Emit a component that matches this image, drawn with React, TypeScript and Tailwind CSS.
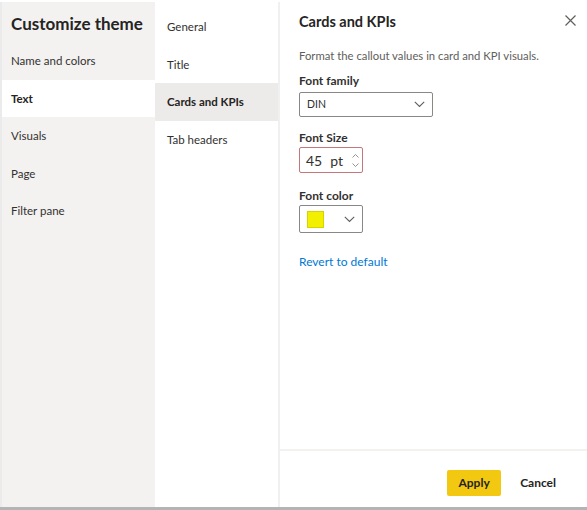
import React from 'react';

const font = { fontFamily: 'Lato, "Noto Sans", sans-serif' };

const sections = ['Name and colors', 'Text', 'Visuals', 'Page', 'Filter pane'];
const subSections = ['General', 'Title', 'Cards and KPIs', 'Tab headers'];

const Chevron = ({ className }: { className?: string }) => (
  <svg className={className} width="11" height="7" viewBox="0 0 11 7" fill="none">
    <path d="M0.8 0.8 L5.5 5.5 L10.2 0.8" stroke="#605e5c" strokeWidth="1.1" />
  </svg>
);

export default function App() {
  const activeSection = 'Text';
  const activeSub = 'Cards and KPIs';

  return (
    <div style={font} className="w-[587px] h-[510px] flex bg-white border-b-[3px] border-[#b4b4b4] pt-[2px] text-[#323130]">
      {/* Theme sections */}
      <div className="w-[155px] bg-[#f3f2f1] border-l-2 border-[#ebebeb] flex flex-col">
        <h1 className="h-[40px] pl-[9px] pt-[11px] text-[17px] font-bold text-[#252423] leading-[22px] whitespace-nowrap">Customize theme</h1>
        {sections.map((s) => (
          <div
            key={s}
            className={`h-[37.5px] flex items-center pl-[9px] text-[11.5px] whitespace-nowrap ${
              s === activeSection ? 'bg-white font-bold text-[#252423]' : 'text-[#323130]'
            }`}
          >
            {s}
          </div>
        ))}
      </div>

      {/* Sub sections */}
      <div className="w-[125px] border-r-2 border-[#f0f0f0] flex flex-col pt-[6px]">
        {subSections.map((s) => (
          <div
            key={s}
            className={`h-[37.5px] flex items-center pl-[12px] text-[11.5px] whitespace-nowrap ${
              s === activeSub ? 'bg-[#edebe9] font-bold text-[#252423]' : 'text-[#323130]'
            }`}
          >
            {s}
          </div>
        ))}
      </div>

      {/* Format pane */}
      <div className="flex-1 flex flex-col">
        <div className="flex-1 pl-[19px] pr-[10px] relative">
          <button className="absolute right-[11px] top-[13px] text-[#605e5c]">
            <svg width="11" height="11" viewBox="0 0 11 11">
              <path d="M0.5 0.5 L10.5 10.5 M10.5 0.5 L0.5 10.5" stroke="#605e5c" strokeWidth="1.2" />
            </svg>
          </button>
          <h2 className="pt-[10px] text-[14.5px] font-bold leading-[20px] text-[#252423] whitespace-nowrap">Cards and KPIs</h2>
          <p className="mt-[17px] text-[11.3px] leading-[14px] text-[#605e5c] whitespace-nowrap">Format the callout values in card and KPI visuals.</p>

          <div className="mt-[10px] text-[12px] font-bold leading-[16px]">Font family</div>
          <div className="mt-[3px] w-[134px] h-[25px] border border-[#8a8886] rounded-[2px] flex items-center justify-between pl-[7px] pr-[7px]">
            <span className="text-[10.5px] text-[#323130]">DIN</span>
            <Chevron />
          </div>

          <div className="mt-[13px] text-[12px] font-bold leading-[16px]">Font Size</div>
          <div className="mt-[1px] w-[64px] h-[26px] border border-[#c4767a] rounded-[2px] flex items-center pl-[6px] pr-[3px]">
            <span className="text-[14px] text-[#323130]">45</span>
            <span className="ml-[8px] text-[14px] text-[#323130]">pt</span>
            <div className="ml-auto flex flex-col gap-[5px]">
              <svg width="7" height="4" viewBox="0 0 7 4">
                <path d="M0.5 3.5 L3.5 0.5 L6.5 3.5" stroke="#8a8886" strokeWidth="0.9" fill="none" />
              </svg>
              <svg width="7" height="4" viewBox="0 0 7 4">
                <path d="M0.5 0.5 L3.5 3.5 L6.5 0.5" stroke="#8a8886" strokeWidth="0.9" fill="none" />
              </svg>
            </div>
          </div>

          <div className="mt-[15px] text-[12px] font-bold leading-[16px]">Font color</div>
          <div className="mt-[1px] w-[64px] h-[28px] border border-[#8a8886] rounded-[2px] flex items-center justify-between pl-[7px] pr-[7px]">
            <span className="w-[17px] h-[17px] bg-[#f2f000] border border-[#d6d400]" />
            <Chevron />
          </div>

          <button className="mt-[20px] block text-[12px] text-[#0078d4]">Revert to default</button>
        </div>

        <div className="h-[58px] border-t-2 border-[#f3f2f1] flex items-center justify-end pr-[31px]">
          <button className="w-[54px] h-[26px] bg-[#f2c811] rounded-[2px] text-[12px] font-bold text-[#252423] mt-[8px]">Apply</button>
          <button className="ml-[19px] text-[12px] font-bold text-[#252423] mt-[8px]">Cancel</button>
        </div>
      </div>
    </div>
  );
}
